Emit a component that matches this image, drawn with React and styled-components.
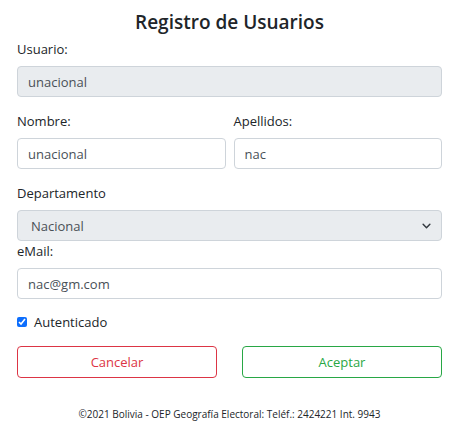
import React from "react";
import styled, { createGlobalStyle } from "styled-components";

const Global = createGlobalStyle`
  html, body { margin: 0; padding: 0; background: #fff; }
  body { font-family: "Open Sans", "Noto Sans", sans-serif; color: #212529; }
  * { box-sizing: border-box; }
`;

const Page = styled.div`
  width: 458px;
  padding: 0 16px 0 17px;
`;

const Title = styled.h1`
  margin: 0;
  height: 39px;
  line-height: 44px;
  text-align: center;
  font-size: 19px;
  font-weight: 600;
  color: #212529;
`;

const Form = styled.form`
  display: flex;
  flex-direction: column;
`;

const Row = styled.div`
  display: grid;
  grid-template-columns: 1fr 1fr;
  column-gap: 8px;
  margin-top: ${(p) => p.$mt || 0}px;
`;

const Field = styled.div`
  display: flex;
  flex-direction: column;
  margin-top: ${(p) => p.$mt || 0}px;
`;

const Label = styled.label`
  font-size: 13px;
  line-height: 20px;
  margin-bottom: 7px;
  color: #212529;
`;

const Input = styled.input`
  height: 31px;
  width: 100%;
  border: 1px solid #ced4da;
  border-radius: 4px;
  padding: 0 10px;
  font-family: inherit;
  font-size: 13px;
  color: #495057;
  background: ${(p) => (p.disabled ? "#e9ecef" : "#fff")};
  outline: none;
  &:disabled { opacity: 1; color: #495057; }
`;

const SelectWrap = styled.div`
  position: relative;
  height: 31px;
  border: 1px solid #ced4da;
  border-radius: 4px;
  background: #e9ecef;
  display: flex;
  align-items: center;
  padding: 0 13px;
  font-size: 13px;
  color: #495057;
`;

const Chevron = styled.svg`
  position: absolute;
  right: 10px;
  top: 50%;
  transform: translateY(-50%);
`;

const CheckRow = styled.label`
  display: flex;
  align-items: center;
  gap: 7px;
  margin-top: 13px;
  font-size: 13px;
  line-height: 20px;
`;

const Check = styled.input`
  margin: 0;
  width: 10px;
  height: 10px;
  accent-color: #0d6efd;
`;

const Buttons = styled.div`
  display: grid;
  grid-template-columns: 200px 200px;
  justify-content: space-between;
  margin-top: 14px;
`;

const Button = styled.button`
  height: 32px;
  border-radius: 4px;
  background: #fff;
  font-family: inherit;
  font-size: 13px;
  border: 1px solid ${(p) => p.$color};
  color: ${(p) => p.$color};
`;

const Footer = styled.footer`
  margin-top: 28px;
  text-align: center;
  font-size: 10px;
  line-height: 16px;
  color: #212529;
`;

export default function App() {
  return (
    <>
      <Global />
      <Page>
        <Title>Registro de Usuarios</Title>
        <Form onSubmit={(e) => e.preventDefault()}>
          <Field>
            <Label>Usuario:</Label>
            <Input disabled defaultValue="unacional" />
          </Field>
          <Row $mt={14}>
            <Field>
              <Label>Nombre:</Label>
              <Input defaultValue="unacional" />
            </Field>
            <Field>
              <Label>Apellidos:</Label>
              <Input defaultValue="nac" />
            </Field>
          </Row>
          <Field $mt={14}>
            <Label>Departamento</Label>
            <SelectWrap>
              Nacional
              <Chevron width="9" height="9" viewBox="0 0 16 16">
                <path d="M2 5l6 6 6-6" fill="none" stroke="#343a40" strokeWidth="2.6" strokeLinecap="round" strokeLinejoin="round" />
              </Chevron>
            </SelectWrap>
          </Field>
          <Field>
            <Label>eMail:</Label>
            <Input defaultValue="nac@gm.com" />
          </Field>
          <CheckRow>
            <Check type="checkbox" defaultChecked />
            Autenticado
          </CheckRow>
          <Buttons>
            <Button type="button" $color="#dc3545">Cancelar</Button>
            <Button type="button" $color="#28a745">Aceptar</Button>
          </Buttons>
        </Form>
        <Footer>©2021 Bolivia - OEP Geografía Electoral: Teléf.: 2424221 Int. 9943</Footer>
      </Page>
    </>
  );
}
